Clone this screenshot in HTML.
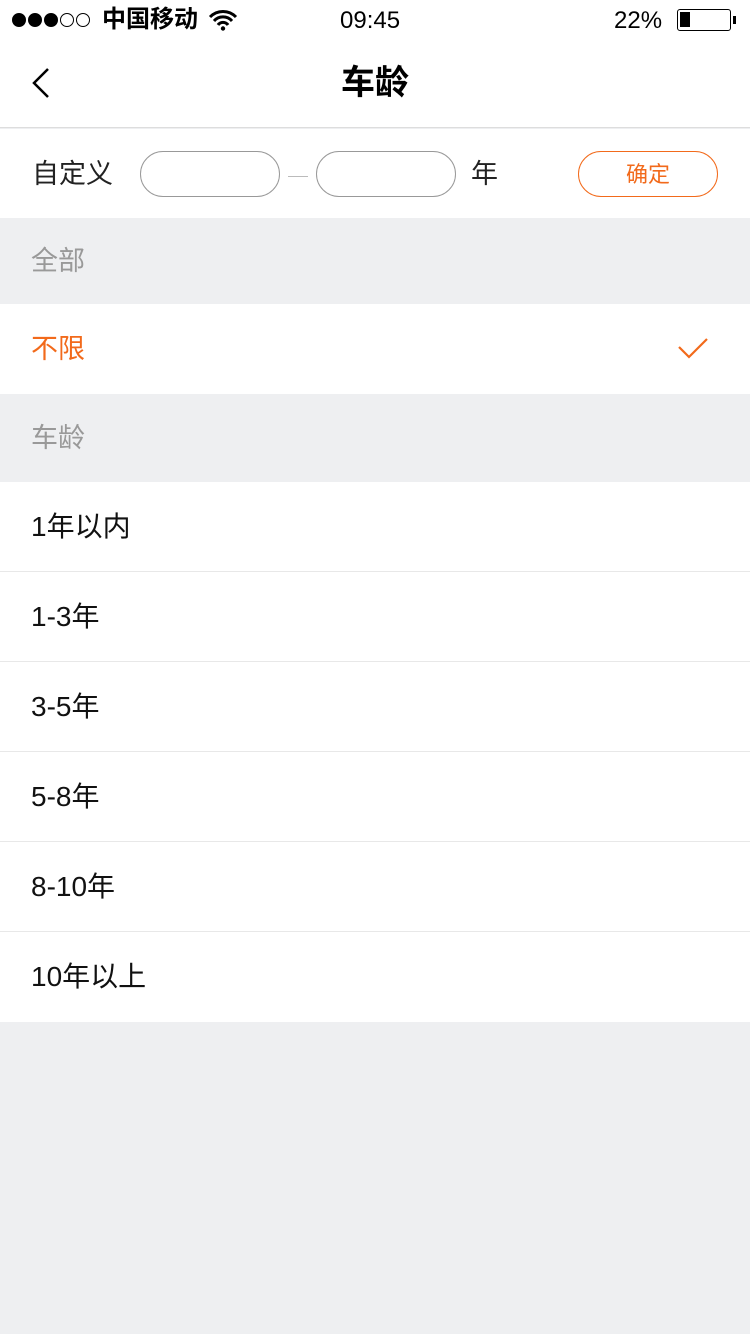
<!DOCTYPE html>
<html><head><meta charset="utf-8"><style>
*{margin:0;padding:0;box-sizing:border-box}
body{width:750px;height:1334px;background:#eeeff1;font-family:"Liberation Sans","Noto Sans CJK SC",sans-serif;position:relative;overflow:hidden}
.abs{position:absolute}
.row{position:absolute;left:0;width:750px;height:90px;background:#fff;font-size:28px;color:#111;line-height:90px;padding-left:31px}
.sep{border-bottom:1px solid #e8e8e8}
.sec{position:absolute;left:0;width:750px;font-size:27px;color:#999;padding-left:31px}
.d{display:inline-block;width:14px;height:14px;border-radius:50%;margin-right:2px;border:1.5px solid #000;vertical-align:middle}
</style></head><body>
<div class="abs" style="left:0;top:0;width:750px;height:128px;background:#fff;border-bottom:1px solid #ddd"></div>
<div class="abs" style="left:12px;top:5px;line-height:30px"><span class="d" style="background:#000"></span><span class="d" style="background:#000"></span><span class="d" style="background:#000"></span><span class="d"></span><span class="d"></span></div>
<div class="abs" style="left:102px;top:5px;font-size:24px;line-height:30px;color:#000;font-weight:600">中国移动</div>
<svg class="abs" style="left:208px;top:9px" width="30" height="22" viewBox="0 0 30 22"><path d="M2 8a18 18 0 0 1 26 0M6 12a12 12 0 0 1 18 0M10 16a6 6 0 0 1 10 0" stroke="#000" stroke-width="3" fill="none"/><circle cx="15" cy="19.5" r="2.2"/></svg>
<div class="abs" style="left:340px;top:6px;font-size:24px;line-height:30px">09:45</div>
<div class="abs" style="left:614px;top:6px;font-size:24px;line-height:30px">22%</div>
<div class="abs" style="left:677px;top:9px;width:54px;height:22px;border:1.5px solid #000;border-radius:3px"><div style="position:absolute;left:2px;top:2px;width:10px;height:15px;background:#000"></div></div>
<div class="abs" style="left:733px;top:16px;width:3px;height:8px;background:#000"></div>
<svg class="abs" style="left:28px;top:66px" width="24" height="34"><path d="M20 3L6 17l14 14" stroke="#000" stroke-width="2.5" fill="none"/></svg>
<div class="abs" style="left:0;top:60px;width:750px;text-align:center;font-size:34px;font-weight:bold;line-height:46px">车龄</div>
<div class="abs" style="left:0;top:129px;width:750px;height:89px;background:#fff"></div>
<div class="abs" style="left:32px;top:156px;font-size:27px;line-height:36px;color:#222">自定义</div>
<div class="abs" style="left:140px;top:151px;width:140px;height:46px;border:1px solid #999;border-radius:23px"></div>
<div class="abs" style="left:288px;top:176px;width:20px;height:1px;background:#bbb"></div>
<div class="abs" style="left:316px;top:151px;width:140px;height:46px;border:1px solid #999;border-radius:23px"></div>
<div class="abs" style="left:471px;top:156px;font-size:27px;line-height:36px;color:#222">年</div>
<div class="abs" style="left:578px;top:151px;width:140px;height:46px;border:1px solid #f26a1b;border-radius:23px;color:#f26a1b;font-size:22px;text-align:center;line-height:46px">确定</div>
<div class="sec" style="top:218px;height:86px;line-height:86px">全部</div>
<div class="row" style="top:304px;color:#f26a1b;font-size:27px">不限</div>
<svg class="abs" style="left:677px;top:336px" width="32" height="24"><path d="M2 11l10 10L30 3" stroke="#f26a1b" stroke-width="2.2" fill="none"/></svg>
<div class="sec" style="top:394px;height:88px;line-height:88px">车龄</div>
<div class="row sep" style="top:482px">1年以内</div>
<div class="row sep" style="top:572px">1-3年</div>
<div class="row sep" style="top:662px">3-5年</div>
<div class="row sep" style="top:752px">5-8年</div>
<div class="row sep" style="top:842px">8-10年</div>
<div class="row" style="top:932px">10年以上</div>
</body></html>
